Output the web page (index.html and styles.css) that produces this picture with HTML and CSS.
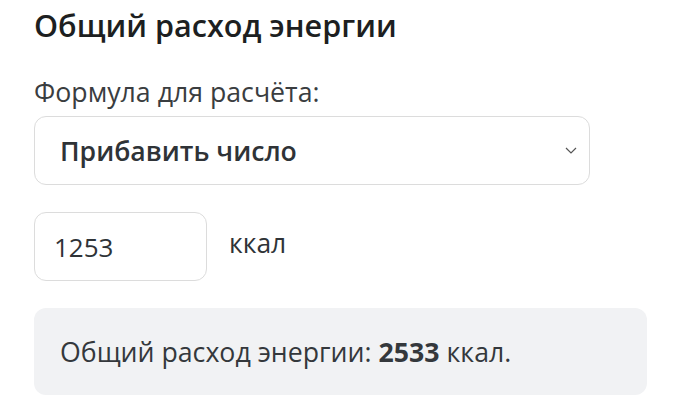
FILE: index.html
```html
<!DOCTYPE html>
<html lang="ru">
<head>
<meta charset="utf-8">
<link rel="stylesheet" href="styles.css">
</head>
<body>
<div class="calc">
  <h2 class="title">Общий расход энергии</h2>
  <div class="label">Формула для расчёта:</div>
  <div class="select">
    <span class="select-text">Прибавить число</span>
    <svg class="chev" width="12" height="7" viewBox="0 0 12 7"><path d="M1 1l5 5 5-5" fill="none" stroke="#555" stroke-width="1.2"/></svg>
  </div>
  <div class="row">
    <div class="input">1253</div>
    <span class="unit">ккал</span>
  </div>
  <div class="result">Общий расход энергии: <b>2533</b> ккал.</div>
</div>
</body>
</html>
```
FILE: styles.css
```css
html, body { margin: 0; padding: 0; background: #fff; }
body { font-family: "Open Sans", sans-serif; color: #212529; }
.calc { padding: 0 33px 0 34px; display: flex; flex-direction: column; }
.title { margin: 4px 0 0; font-size: 30.6px; font-weight: 600; line-height: 42px; color: #1d1f21; }
.label { margin-top: 30px; font-size: 26.7px; line-height: 32px; color: #3a3d40; }
.select { margin-top: 8px; width: 556px; height: 69px; box-sizing: border-box; border: 1px solid #dcdcdc; border-radius: 12px; display: flex; align-items: center; justify-content: space-between; padding: 0 12px 0 25px; }
.select-text { font-size: 26.6px; font-weight: 600; color: #2f3337; }
.row { margin-top: 27px; display: flex; align-items: center; gap: 22px; }
.input { width: 173px; height: 69px; box-sizing: border-box; border: 1px solid #dcdcdc; border-radius: 12px; display: flex; align-items: center; padding-left: 19px; font-size: 26px; color: #2f3337; }
.unit { font-size: 26.5px; color: #2f3337; margin-top: -8px; }
.result { margin-top: 27px; width: 613px; height: 87px; box-sizing: border-box; background: #f1f2f4; border-radius: 12px; display: flex; align-items: center; padding-left: 26px; font-size: 26.7px; color: #34383c; }
.result b { font-weight: 700; margin: 0 7px; }
```
